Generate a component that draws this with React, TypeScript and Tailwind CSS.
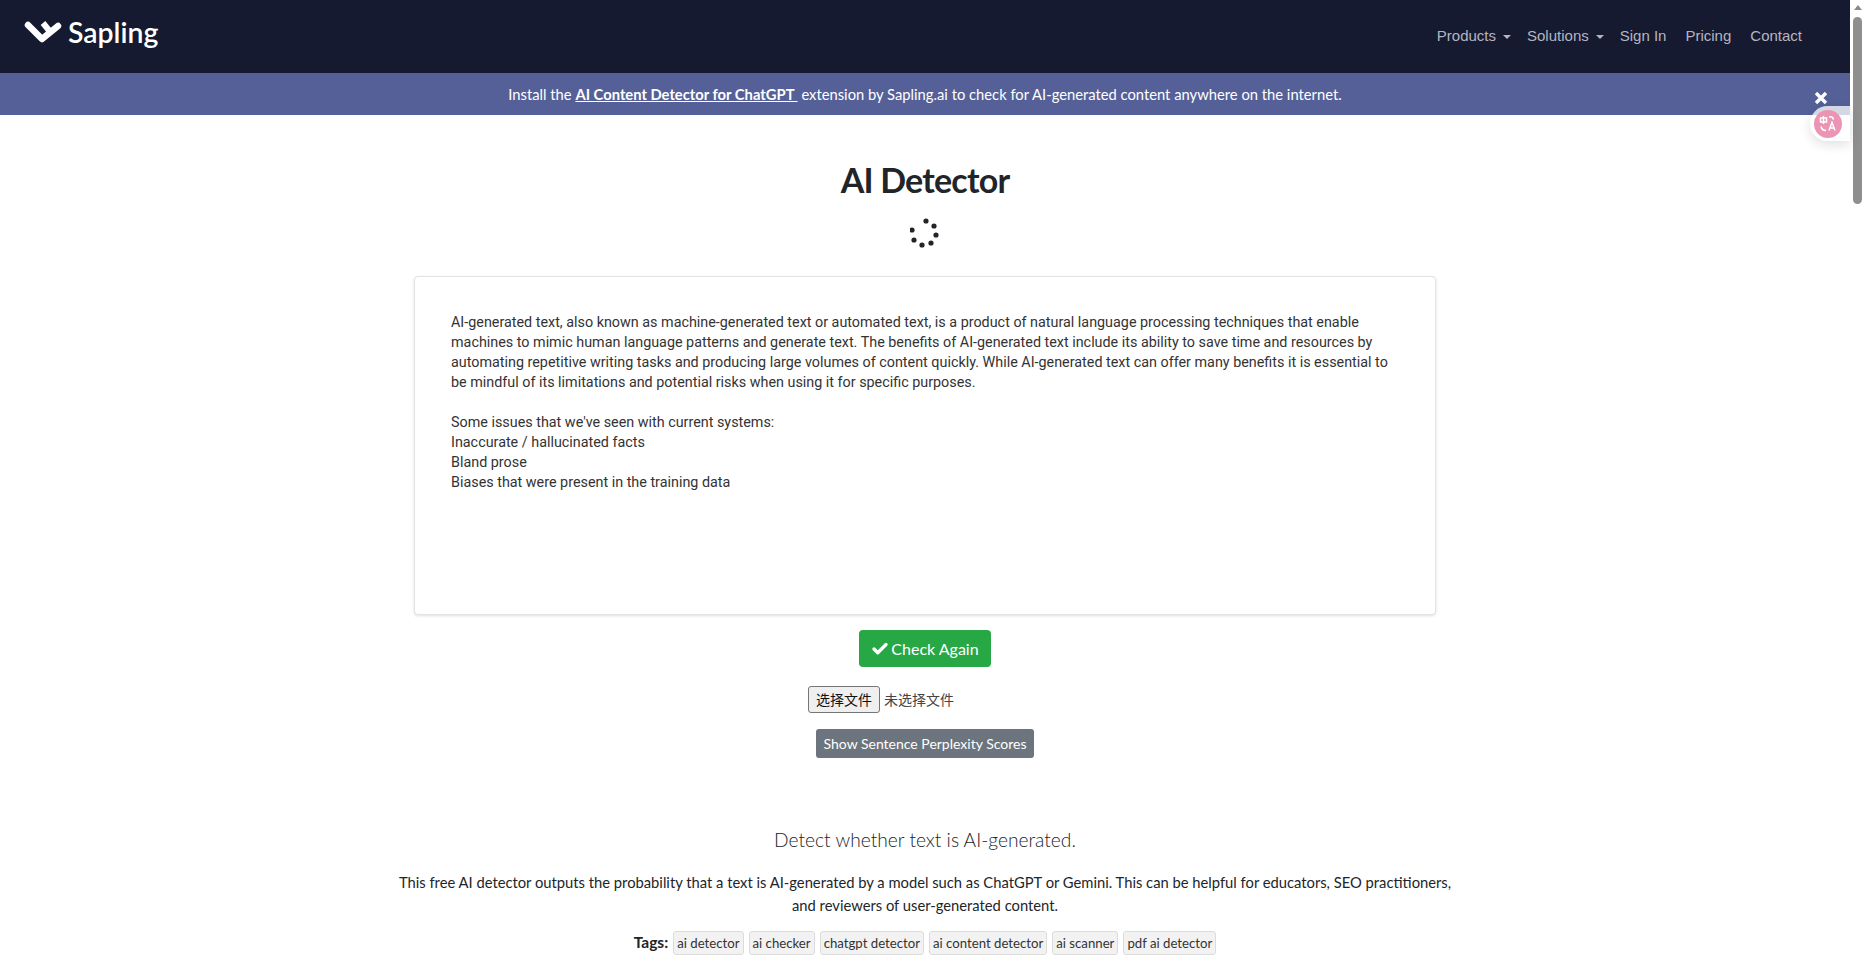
import {Check} from "lucide-react";

const sans = "font-['Lato',sans-serif]";
const tags = ["ai detector", "ai checker", "chatgpt detector", "ai content detector", "ai scanner", "pdf ai detector"];
const navItems = [
    {label: "Products", caret: true},
    {label: "Solutions", caret: true},
    {label: "Sign In"},
    {label: "Pricing"},
    {label: "Contact"},
];

function Logo() {
    return (
        <svg width="38" height="26" viewBox="0 0 38 26" className="shrink-0">
            <path d="M4 6 L18 20 L34 7" fill="none" stroke="#fff" strokeWidth="6.5" strokeLinecap="round" strokeLinejoin="round"/>
            <path d="M19 4 L25.5 12" fill="none" stroke="#fff" strokeWidth="6"/>
        </svg>
    );
}

function Spinner() {
    const dots = [[16, 3], [24, 8], [26, 17], [21, 25], [12, 27], [4, 22], [2, 12]];
    return (
        <svg width="30" height="30" viewBox="0 0 30 30" className="mx-auto">
            {dots.map(([x, y]) => <circle key={x} cx={x} cy={y} r="2.6" fill="#212529"/>)}
        </svg>
    );
}

function Navbar() {
    return (
        <nav className="h-[73px] bg-[#151a30] flex items-center justify-between pl-[24px] pr-[48px]">
            <div className="flex items-center gap-[6px] -mt-[9px]">
                <Logo/>
                <span className="font-['Lato',sans-serif] font-semibold text-[28.4px] text-white leading-none">Sapling</span>
            </div>
            <ul className="flex items-center gap-[19px] font-['Liberation_Sans',sans-serif] text-[15px] text-[#b5b5c0]">
                {navItems.map(item => (
                    <li key={item.label} className={item.caret ? "flex items-center -mr-[3px]" : "flex items-center"}>
                        {item.label}
                        {item.caret && <span className="ml-[7px] border-x-[4px] border-t-[4px] border-x-transparent border-t-[#b5b5c0]"/>}
                    </li>
                ))}
            </ul>
        </nav>
    );
}

function Banner() {
    return (
        <div className={`relative h-[42px] bg-[#556098] flex items-center justify-center text-white text-[14.75px] ${sans}`}>
            <p>
                Install the <a className="font-bold underline">AI Content Detector for ChatGPT&nbsp;</a> extension by Sapling.ai to check for AI-generated content anywhere on the internet.
            </p>
            <span className="absolute right-[22px] top-[18px] text-[0px]">
                <svg width="14" height="14" viewBox="0 0 14 14"><path d="M2 2 L12 12 M12 2 L2 12" stroke="#fff" strokeWidth="3.4"/></svg>
            </span>
        </div>
    );
}

function TranslateWidget() {
    return (
        <div className="absolute right-0 top-[106px] w-[40px] h-[35px] rounded-l-[18px] bg-white/75 shadow-[0_4px_12px_rgba(0,0,0,0.12)] flex items-center pl-[4px]">
            <div className="w-[28px] h-[28px] rounded-full bg-[#ec94b3] flex items-center justify-center">
                <svg width="20" height="20" viewBox="0 0 20 20" fill="none" stroke="#fff" strokeWidth="1.5">
                    <path d="M5.5 2 V10 M2.5 4 H8.5 V8 H2.5 Z"/>
                    <path d="M11 16.5 L14 8.5 L17 16.5 M12 14 H16"/>
                    <path d="M11 3 C13 2.5 15 3.5 15.5 5.5 M3 12.5 C3.5 15 5.5 16.5 8 16.5"/>
                </svg>
            </div>
        </div>
    );
}

function Scrollbar() {
    return (
        <div className="w-[15px] shrink-0 bg-white flex flex-col items-center">
            <span className="mt-[5px] border-x-[4px] border-b-[5px] border-x-transparent border-b-[#8a8a8a]"/>
            <div className="mt-[7px] w-[9px] h-[187px] rounded-full bg-[#8f8f8f]"/>
        </div>
    );
}

function Detector() {
    return (
        <section className="flex flex-col items-center">
            <h1 className="mt-[36px] h-[58px] font-['Lato',sans-serif] font-bold text-[34px] tracking-[-0.8px] leading-[58px] text-[#212529]">AI Detector</h1>
            <div className="mt-[9px] h-[36px]"><Spinner/></div>
            <div className="mt-[22px] w-[1022px] h-[339px] bg-white border border-[#e3e3e3] rounded-[4px] shadow-[0_1px_3px_rgba(0,0,0,0.12)] pl-[36px] pr-[39px] pt-[36px] font-['Roboto',sans-serif] text-[14.35px] leading-[20px] text-[#333]">
                AI-generated text, also known as machine-generated text or automated text, is a product of natural language processing techniques that enable machines to mimic human language patterns and generate text. The benefits of AI-generated text include its ability to save time and resources by automating repetitive writing tasks and producing large volumes of content quickly. While AI-generated text can offer many benefits it is essential to be mindful of its limitations and potential risks when using it for specific purposes.
                <br/><br/>
                Some issues that we've seen with current systems:<br/>
                Inaccurate / hallucinated facts<br/>
                Bland prose<br/>
                Biases that were present in the training data
            </div>
            <button className={`mt-[15px] h-[37px] w-[132px] rounded-[4px] bg-[#28a745] text-white text-[16px] flex items-center justify-center gap-[2px] ${sans}`}>
                <Check size={18} strokeWidth={4.5}/>Check Again
            </button>
            <div className="mt-[18px] h-[28px] w-[234px] flex items-center text-[14px] text-[#444] font-['Noto_Sans_CJK_SC',sans-serif]">
                <button className="h-[27px] w-[72px] bg-[#efefef] border border-[#767676] rounded-[3px] text-[#111]">选择文件</button>
                <span className="ml-[4px]">未选择文件</span>
            </div>
            <button className={`mt-[16px] h-[29px] w-[218px] rounded-[3px] bg-[#6c757d] text-white text-[14px] ${sans}`}>
                Show Sentence Perplexity Scores
            </button>
        </section>
    );
}

function About() {
    return (
        <section className={`mt-[69px] flex flex-col items-center text-[#212529] ${sans}`}>
            <h2 className="h-[26px] text-[19.2px] font-light leading-[26px]">Detect whether text is AI-generated.</h2>
            <p className="mt-[18px] w-[1070px] text-center text-[14.75px] leading-[22.5px]">
                This free AI detector outputs the probability that a text is AI-generated by a model such as ChatGPT or Gemini. This can be helpful for educators, SEO practitioners, and reviewers of user-generated content.
            </p>
            <div className="mt-[15px] flex items-center gap-[5px] text-[13.2px]">
                <strong className="text-[15.5px]">Tags:</strong>
                {tags.map(tag => (
                    <span key={tag} className="h-[24px] px-[3px] leading-[22px] bg-[#f2f2f2] border border-[#dcdcdc] rounded-[3px] text-[#333]">{tag}</span>
                ))}
            </div>
        </section>
    );
}

export default function App() {
    return (
        <div className="relative h-[957px] overflow-hidden flex bg-white">
            <div className="flex-1 min-w-0 relative">
                <Navbar/>
                <Banner/>
                <TranslateWidget/>
                <Detector/>
                <About/>
            </div>
            <Scrollbar/>
        </div>
    );
}
